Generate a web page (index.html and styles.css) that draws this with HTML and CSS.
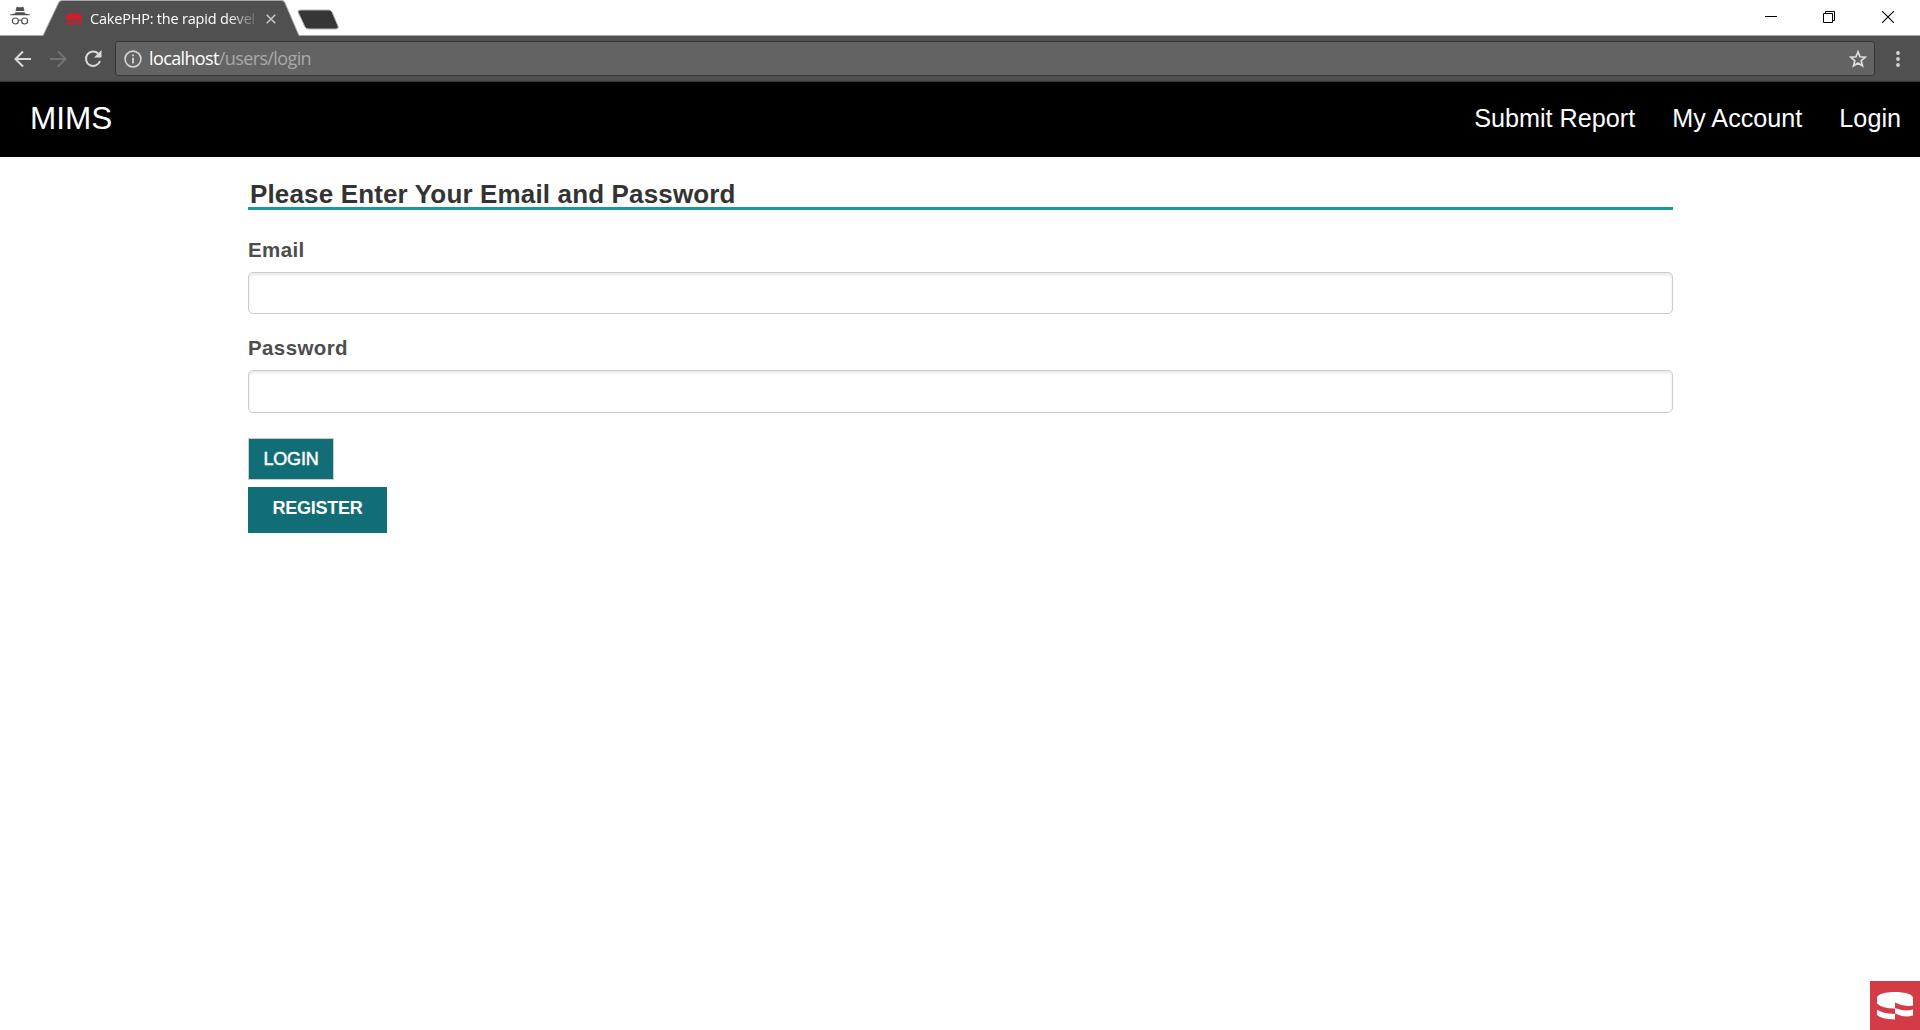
FILE: index.html
```html
<!DOCTYPE html>
<html lang="en">
<head>
<meta charset="utf-8">
<title>CakePHP: the rapid development php framework</title>
<link rel="stylesheet" href="styles.css">
</head>
<body>
<div class="tabstrip">
  <svg class="incognito" width="20" height="20" viewBox="0 0 20 20" fill="none" stroke="#505050">
    <path d="M5.500 5 6.600.8l2 .5h2.800L13.400.8 14.500 5z" fill="#505050" stroke="none"/>
    <path d="M5.500 6.200h9l.5 1.400 5 .8v.9H0v-.9l5-.8z" fill="#505050" stroke="none"/>
    <circle cx="5.400" cy="15" r="3" stroke-width="1.200"/><circle cx="14.600" cy="15" r="3" stroke-width="1.200"/>
    <path d="M8.400 14.500q1.600-1 3.200 0" stroke-width="1.200"/>
  </svg>
  <div class="tab">
    <svg class="tab-shape" width="258" height="36" viewBox="0 0 258 36">
      <path d="M0 36 15 4Q16 .5 19 .5H239Q241 .5 242 3L256 36z" fill="#505050"/>
      <path d="M0 35.500 15 4Q16 .5 19 .5H239Q241 .5 242 3L256 35.500" fill="none" stroke="#a8a8a8"/>
    </svg>
    <svg class="favicon" width="16" height="12" viewBox="0 0 36 27" fill="#c9202f">
      <path d="M0 6C2-1 34-1 36 6v9q-7 4-18-3v5Q5 18 0 14z"/><path d="M0 18q6 4 18 4v5Q5 27 0 23zM18 15q8 5 18 3v6q-9 2-18-3z"/>
    </svg>
    <span class="tab-title">CakePHP: the rapid devel</span>
    <svg class="tab-close" width="10" height="10" viewBox="0 0 10 10"><path d="M.7.7 9.300 9.300M9.300.7.7 9.300" stroke="#c8c8c8" stroke-width="1.500"/></svg>
  </div>
  <svg class="newtab" width="44" height="22" viewBox="0 0 44 22"><path d="M4 1H32Q34 1 35 3L41 17Q42 20 39 20H12Q9 20 8 18L1 3Q.5 1 4 1z" fill="#363636" stroke="#b5b5b5"/></svg>
  <div class="window-buttons">
    <svg width="12" height="12" viewBox="0 0 12 12"><path d="M0 5.500h12" stroke="#000"/></svg>
    <svg width="12" height="12" viewBox="0 0 12 12" fill="none" stroke="#000"><path d="M.5 2.500h9v9h-9zM2.500 2.500v-2h9v9h-2"/></svg>
    <svg width="12" height="12" viewBox="0 0 12 12"><path d="m0 0 12 12M12 0 0 12" stroke="#000" stroke-width="1.100"/></svg>
  </div>
</div>
<div class="toolbar">
  <svg class="back" width="18" height="18" viewBox="0 0 18 18" fill="none" stroke="#dadada" stroke-width="2"><path d="M17 9H2M9 1.500 1.500 9 9 16.500"/></svg>
  <svg class="forward" width="18" height="18" viewBox="0 0 18 18" fill="none" stroke="#737373" stroke-width="2"><path d="M1 9h15M9 1.500 16.500 9 9 16.500"/></svg>
  <svg class="reload" width="18" height="18" viewBox="0 0 18 18"><path d="M14.300 3.700A7.200 7.200 0 1 0 16 11" fill="none" stroke="#dadada" stroke-width="2"/><path d="M17.500 0v7.500H10z" fill="#dadada"/></svg>
  <div class="omnibox">
    <svg width="18" height="18" viewBox="0 0 18 18"><circle cx="9" cy="9" r="7.900" fill="none" stroke="#d5d5d5" stroke-width="1.600"/><path d="M8.100 4.500h1.800v1.800H8.100zM8.100 7.800h1.800v5.700H8.100z" fill="#d5d5d5"/></svg>
    <span class="url"><b>localhost</b>/users/login</span>
    <svg class="star" width="18" height="18" viewBox="0 0 18 18"><path d="m9 1.800 2 5 5.300.4-4.100 3.500 1.300 5.300L9 13.100 4.500 16l1.300-5.300-4.100-3.500L7 6.800z" fill="none" stroke="#dedede" stroke-width="1.700"/></svg>
  </div>
  <svg class="menu" width="4" height="16" viewBox="0 0 4 16" fill="#d5d5d5"><circle cx="2" cy="2" r="1.900"/><circle cx="2" cy="8" r="1.900"/><circle cx="2" cy="14" r="1.900"/></svg>
</div>
<header class="site-header">
  <a class="brand">MIMS</a>
  <nav class="site-nav"><a>Submit Report</a><a>My Account</a><a>Login</a></nav>
</header>
<main class="content">
  <h1 class="heading">Please Enter Your Email and Password</h1>
  <form class="login-form">
    <label for="email">Email</label>
    <input id="email" type="email">
    <label for="password">Password</label>
    <input id="password" type="password">
    <button class="login" type="submit">LOGIN</button>
    <a class="register">REGISTER</a>
  </form>
</main>
<div class="debug-badge">
  <svg width="36" height="28" viewBox="0 0 36 28" fill="#fff">
    <path d="M0 6C0-2 36-2 36 6V13.500Q27 15.500 18 10.500V16.500Q5 16.500 0 11.500z"/><path d="M0 17.500Q5 21.500 18 22V27.500Q4 27 0 23z"/><path d="M18 16Q27 20 36 17.500V23.500Q27 26 18 21.500z"/>
  </svg>
</div>
</body>
</html>
```
FILE: styles.css
```css
* { box-sizing: border-box; }
body { margin: 0; height: 1030px; overflow: hidden; background: #fff; font-family: "Liberation Sans", Arial, sans-serif; }
svg { display: block; flex: none; }

.tabstrip { display: flex; height: 36px; border-bottom: 1px solid #a8a8a8; align-items: flex-start; }
.incognito { margin: 6px 0 0 10px; }
.tab { position: relative; display: flex; width: 258px; height: 36px; margin-left: 13px; padding-left: 23px; flex: none; }
.tab-shape { position: absolute; left: 0; top: 0; }
.favicon { position: relative; margin-top: 13px; }
.tab-title { position: relative; width: 168px; height: 24px; margin: 7px 0 0 8px; white-space: nowrap; font: 14.500px/24px "Open Sans", sans-serif; letter-spacing: -0.2px; color: #fff; -webkit-mask-image: linear-gradient(90deg, #000 138px, transparent 170px); mask-image: linear-gradient(90deg, #000 138px, transparent 170px); }
.tab-close { position: relative; margin: 14px 0 0 8px; }
.newtab { margin: 9px 0 0 -4px; }
.window-buttons { display: flex; gap: 46px; margin: 11px 26px 0 auto; }
.window-buttons svg:last-child { margin-left: 1px; }

.toolbar { display: flex; height: 46px; align-items: center; padding-left: 14px; background: #505050; border-bottom: 1px solid #333; }
.forward { margin-left: 17px; }
.reload { margin-left: 17px; }
.omnibox { display: flex; align-items: center; width: 1760px; height: 35px; margin-left: 13px; padding: 0 7px 0 8px; background: #636363; border: 1px solid #363636; border-radius: 3px; }
.url { margin: -1px 0 0 7px; font: 18px/26px "Open Sans", sans-serif; letter-spacing: -0.620px; color: #a9a9a9; }
.url b { font-weight: 400; color: #fff; }
.star { margin-left: auto; }
.menu { margin-left: 21px; }

.site-header { display: flex; justify-content: space-between; align-items: center; height: 75px; padding: 0 19px 2px 30px; background: #000; color: #fff; }
.brand { font-size: 31.500px; }
.site-nav { display: flex; gap: 37px; font-size: 25.200px; }

.content { width: 1425px; margin: 0 0 0 248px; padding-top: 23px; }
.heading { margin: 0; height: 30px; padding-left: 2px; border-bottom: 3px solid #1798a5; font-size: 26px; line-height: 28px; letter-spacing: 0.150px; color: #333; }
.login-form { display: flex; flex-direction: column; align-items: flex-start; padding-top: 28px; }
.login-form label { height: 34px; font-size: 20.500px; font-weight: 700; line-height: 23px; letter-spacing: 0.4px; color: #4d4d4d; }
.login-form input { width: 100%; height: 42px; margin: 0 0 22px; border: 1px solid #ccc; border-radius: 5px; background: #fff; box-shadow: inset 0 2px 3px rgba(0, 0, 0, .09); }
.login-form #password { height: 43px; }
.login { width: 86px; height: 42px; margin: 3px 0 7px; padding: 0; border: 1px solid #ccc; background: #116d76; color: #fff; font: 18px/20px "Liberation Sans", Arial, sans-serif; letter-spacing: -0.2px; -webkit-text-stroke: .5px #fff; }
.register { width: 139px; height: 46px; background: #116d76; color: #fff; font-size: 18px; font-weight: 700; line-height: 43px; letter-spacing: -0.250px; text-align: center; }

.debug-badge { position: fixed; right: 0; bottom: 0; display: flex; align-items: center; justify-content: center; width: 50px; height: 49px; background: #d33c47; }
```
